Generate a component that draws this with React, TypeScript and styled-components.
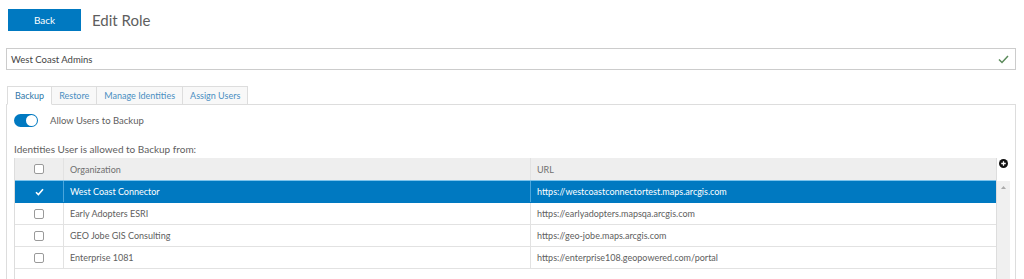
import React from "react";
import styled, { createGlobalStyle } from "styled-components";

const GlobalStyle = createGlobalStyle`
  body {
    margin: 0;
    background: #fff;
    font-family: Lato, "Noto Sans", sans-serif;
    color: #4c4c4c;
  }
`;

const Page = styled.div`
  width: 1024px;
  height: 279px;
  overflow: hidden;
  padding: 9px 8px 0 6px;
  box-sizing: border-box;
`;

const TopBar = styled.div`
  display: flex;
  align-items: center;
  gap: 11px;
  padding-left: 2px;
`;

const BackButton = styled.button`
  width: 73px;
  height: 22px;
  border: none;
  background: #0079c1;
  color: #fff;
  font-family: inherit;
  font-size: 10px;
  padding: 0;
`;

const Title = styled.h1`
  margin: 0;
  font-size: 15px;
  font-weight: 400;
  color: #5e5e5e;
`;

const NameField = styled.div`
  margin-top: 17px;
  height: 22px;
  border: 1px solid #ccc;
  box-sizing: border-box;
  display: flex;
  align-items: center;
  justify-content: space-between;
  padding: 0 6px 0 4px;
  font-size: 9.5px;
  color: #444;
`;

const Tabs = styled.div`
  display: flex;
  margin-top: 16px;
  margin-left: 1px;
`;

const Tab = styled.div<{ $active?: boolean }>`
  height: 19px;
  padding: 0 7px;
  display: flex;
  align-items: center;
  font-size: 9px;
  color: ${(p) => (p.$active ? "#2f77a8" : "#4a8fc2")};
  border: 1px solid #ddd;
  border-bottom: ${(p) => (p.$active ? "1px solid #fff" : "1px solid #ddd")};
  background: ${(p) => (p.$active ? "#fff" : "#f8f8f8")};
  margin-right: -1px;
  margin-bottom: -1px;
  position: relative;
  z-index: ${(p) => (p.$active ? 1 : 0)};
  box-sizing: border-box;
`;

const Panel = styled.div`
  border: 1px solid #ddd;
  height: 200px;
  padding: 9px 5px 0 7px;
  box-sizing: border-box;
`;

const ToggleRow = styled.div`
  display: flex;
  align-items: center;
  gap: 12px;
  font-size: 9.5px;
  color: #606060;
`;

const Toggle = styled.div`
  width: 24px;
  height: 13px;
  border-radius: 7px;
  background: #0079c1;
  position: relative;
  &::after {
    content: "";
    position: absolute;
    right: 1px;
    top: 1px;
    width: 11px;
    height: 11px;
    border-radius: 50%;
    background: #fff;
  }
`;

const SectionLabel = styled.div`
  margin-top: 16px;
  font-size: 10px;
  color: #606060;
  line-height: 12px;
`;

const TableWrap = styled.div`
  display: flex;
  margin-top: 3px;
  height: 130px;
`;

const Table = styled.div`
  width: 982px;
  border-left: 1px solid #ddd;
  border-right: 1px solid #ddd;
`;

const Row = styled.div<{ $head?: boolean; $selected?: boolean }>`
  display: grid;
  grid-template-columns: 48px 467px 1fr;
  height: ${(p) => (p.$head ? "23px" : "22px")};
  background: ${(p) => (p.$head ? "#eeeeee" : p.$selected ? "#0079c1" : "#fff")};
  color: ${(p) => (p.$selected ? "#fff" : p.$head ? "#707070" : "#606060")};
  border-bottom: 1px solid
    ${(p) => (p.$head ? "#7cc3ec" : p.$selected ? "#0079c1" : "#e2e2e2")};
  box-sizing: border-box;
  font-size: 9px;
`;

const Cell = styled.div<{ $selected?: boolean; $center?: boolean }>`
  display: flex;
  align-items: center;
  justify-content: ${(p) => (p.$center ? "center" : "flex-start")};
  padding-left: ${(p) => (p.$center ? "0" : "6px")};
  border-left: 1px solid ${(p) => (p.$selected ? "#4aa6dc" : "#e2e2e2")};
  &:first-child {
    border-left: none;
  }
`;

const Box = styled.div`
  width: 10px;
  height: 10px;
  border: 1px solid #9a9a9a;
  border-radius: 2px;
  background: #fff;
  box-sizing: border-box;
`;

const Side = styled.div`
  width: 13px;
  display: flex;
  flex-direction: column;
`;

const PlusSlot = styled.div`
  height: 23px;
  display: flex;
  justify-content: center;
  padding-top: 1px;
  box-sizing: border-box;
`;

const Scroll = styled.div`
  flex: 1;
  background: #f0f0f0;
  display: flex;
  justify-content: center;
  padding-top: 5px;
`;

const rows = [
  { org: "West Coast Connector", url: "https://westcoastconnectortest.maps.arcgis.com", selected: true },
  { org: "Early Adopters ESRI", url: "https://earlyadopters.mapsqa.arcgis.com" },
  { org: "GEO Jobe GIS Consulting", url: "https://geo-jobe.maps.arcgis.com" },
  { org: "Enterprise 1081", url: "https://enterprise108.geopowered.com/portal" },
];

export default function App() {
  return (
    <Page>
      <GlobalStyle />
      <TopBar>
        <BackButton>Back</BackButton>
        <Title>Edit Role</Title>
      </TopBar>
      <NameField>
        <span>West Coast Admins</span>
        <svg width="11" height="9" viewBox="0 0 11 9">
          <path d="M1 4.5 L4 7.5 L10 1" fill="none" stroke="#5a8a5a" strokeWidth="1.5" />
        </svg>
      </NameField>
      <Tabs>
        <Tab $active>Backup</Tab>
        <Tab>Restore</Tab>
        <Tab>Manage Identities</Tab>
        <Tab>Assign Users</Tab>
      </Tabs>
      <Panel>
        <ToggleRow>
          <Toggle />
          <span>Allow Users to Backup</span>
        </ToggleRow>
        <SectionLabel>Identities User is allowed to Backup from:</SectionLabel>
        <TableWrap>
          <Table>
            <Row $head>
              <Cell $center>
                <Box />
              </Cell>
              <Cell>Organization</Cell>
              <Cell>URL</Cell>
            </Row>
            {rows.map((r) => (
              <Row key={r.org} $selected={r.selected}>
                <Cell $center>
                  {r.selected ? (
                    <svg width="9" height="8" viewBox="0 0 9 8">
                      <path d="M1 4.2 L3.4 6.6 L8 1.2" fill="none" stroke="#fff" strokeWidth="1.6" />
                    </svg>
                  ) : (
                    <Box />
                  )}
                </Cell>
                <Cell $selected={r.selected}>{r.org}</Cell>
                <Cell $selected={r.selected}>{r.url}</Cell>
              </Row>
            ))}
          </Table>
          <Side>
            <PlusSlot>
              <svg width="9" height="9" viewBox="0 0 10 10">
                <circle cx="5" cy="5" r="5" fill="#111" />
                <path d="M5 2.5 V7.5 M2.5 5 H7.5" stroke="#fff" strokeWidth="1.4" />
              </svg>
            </PlusSlot>
            <Scroll>
              <svg width="5" height="3" viewBox="0 0 5 3">
                <path d="M0 3 L2.5 0 L5 3 Z" fill="#aaa" />
              </svg>
            </Scroll>
          </Side>
        </TableWrap>
      </Panel>
    </Page>
  );
}
